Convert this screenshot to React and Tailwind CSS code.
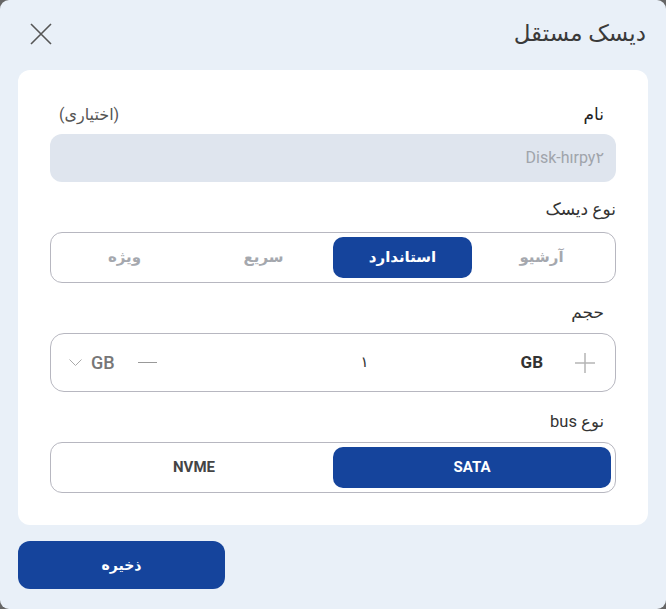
import React from "react";

const font = { fontFamily: 'Roboto, "DejaVu Sans", sans-serif' };

function Segmented({ items, active, cols }) {
  return (
    <div className={`grid ${cols} h-[51px] rounded-[12px] border border-[#b7b7c0] p-[4px]`}>
      {items.map((it) => (
        <div
          key={it}
          className={
            it === active
              ? "flex items-center justify-center rounded-[10px] bg-[#15449c] text-[15px] font-bold text-white"
              : "flex items-center justify-center text-[15px] font-bold text-[#a5a8ae]"
          }
        >
          {it}
        </div>
      ))}
    </div>
  );
}

export default function App() {
  return (
    <div className="h-[609px] w-[666px] bg-[#666666]" style={font}>
      <div dir="rtl" className="flex h-full flex-col rounded-[9px] bg-[#e9f0f8]">
        <div className="flex h-[70px] items-center justify-between pl-[30px] pr-[20px] pb-[2px]">
          <div className="text-[23px] text-[#3a3a3a]">دیسک مستقل</div>
          <svg width="22" height="22" viewBox="0 0 22 22" className="text-[#555]">
            <path d="M1 1 L21 21 M21 1 L1 21" stroke="currentColor" strokeWidth="1.6" fill="none" />
          </svg>
        </div>

        <div className="mx-[18px] flex flex-col rounded-[12px] bg-white px-[32px] pt-[33px] pb-[32px]">
          <div className="flex h-[24px] items-center justify-between pr-[12px] pl-[9px]">
            <span className="text-[17px] font-medium text-[#222]">نام</span>
            <span className="text-[16px] text-[#555]">(اختیاری)</span>
          </div>
          <div className="mt-[7px] flex h-[48px] items-center rounded-[12px] bg-[#dfe5ee] pr-[12px] text-[16px] text-[#a0a4ab]">
            Disk-hırpy۲
          </div>

          <div className="mt-[16px] flex h-[24px] items-center text-[17px] text-[#333]">نوع دیسک</div>
          <div className="mt-[10px]">
            <Segmented
              items={["آرشیو", "استاندارد", "سریع", "ویژه"]}
              active="استاندارد"
              cols="grid-cols-4"
            />
          </div>

          <div className="mt-[18px] flex h-[24px] items-center pr-[12px] text-[17px] text-[#333]">حجم</div>
          <div className="mt-[8px] flex h-[59px] items-center rounded-[14px] border border-[#b7b7c0] pr-[20px] pl-[18px]">
            <svg width="20" height="20" viewBox="0 0 20 20" className="shrink-0 text-[#b5b5b5]">
              <path d="M10 0 V20 M0 10 H20" stroke="currentColor" strokeWidth="1.5" fill="none" />
            </svg>
            <span className="mr-[32px] text-[17px] font-bold text-[#333]">GB</span>
            <div className="flex-1 pl-[52px] text-center text-[15px] text-[#333]">۱</div>
            <div className="ml-[-2px] h-[1.5px] w-[19px] bg-[#999]" />
            <span className="mr-[25px] text-[18px] font-medium text-[#777]">GB</span>
            <svg width="13" height="8" viewBox="0 0 13 8" className="mr-[9px] text-[#aaa]">
              <path d="M0.5 0.5 L6.5 6.5 L12.5 0.5" stroke="currentColor" strokeWidth="1" fill="none" />
            </svg>
          </div>

          <div className="mt-[18px] flex h-[24px] items-center pr-[12px] text-[16.5px] text-[#333]">نوع bus</div>
          <div className="mt-[8px]">
            <div className="grid h-[51px] grid-cols-2 rounded-[12px] border border-[#b7b7c0] p-[4px]">
              <div className="flex items-center justify-center rounded-[10px] bg-[#15449c] text-[15px] font-bold text-white">
                SATA
              </div>
              <div className="flex items-center justify-center text-[15px] font-bold text-[#444]">NVME</div>
            </div>
          </div>
        </div>

        <div className="mt-[16px] flex justify-end px-[18px]">
          <button className="flex h-[48px] w-[207px] items-center justify-center rounded-[12px] bg-[#15449c] text-[14px] font-bold text-white">
            ذخیره
          </button>
        </div>
      </div>
    </div>
  );
}
